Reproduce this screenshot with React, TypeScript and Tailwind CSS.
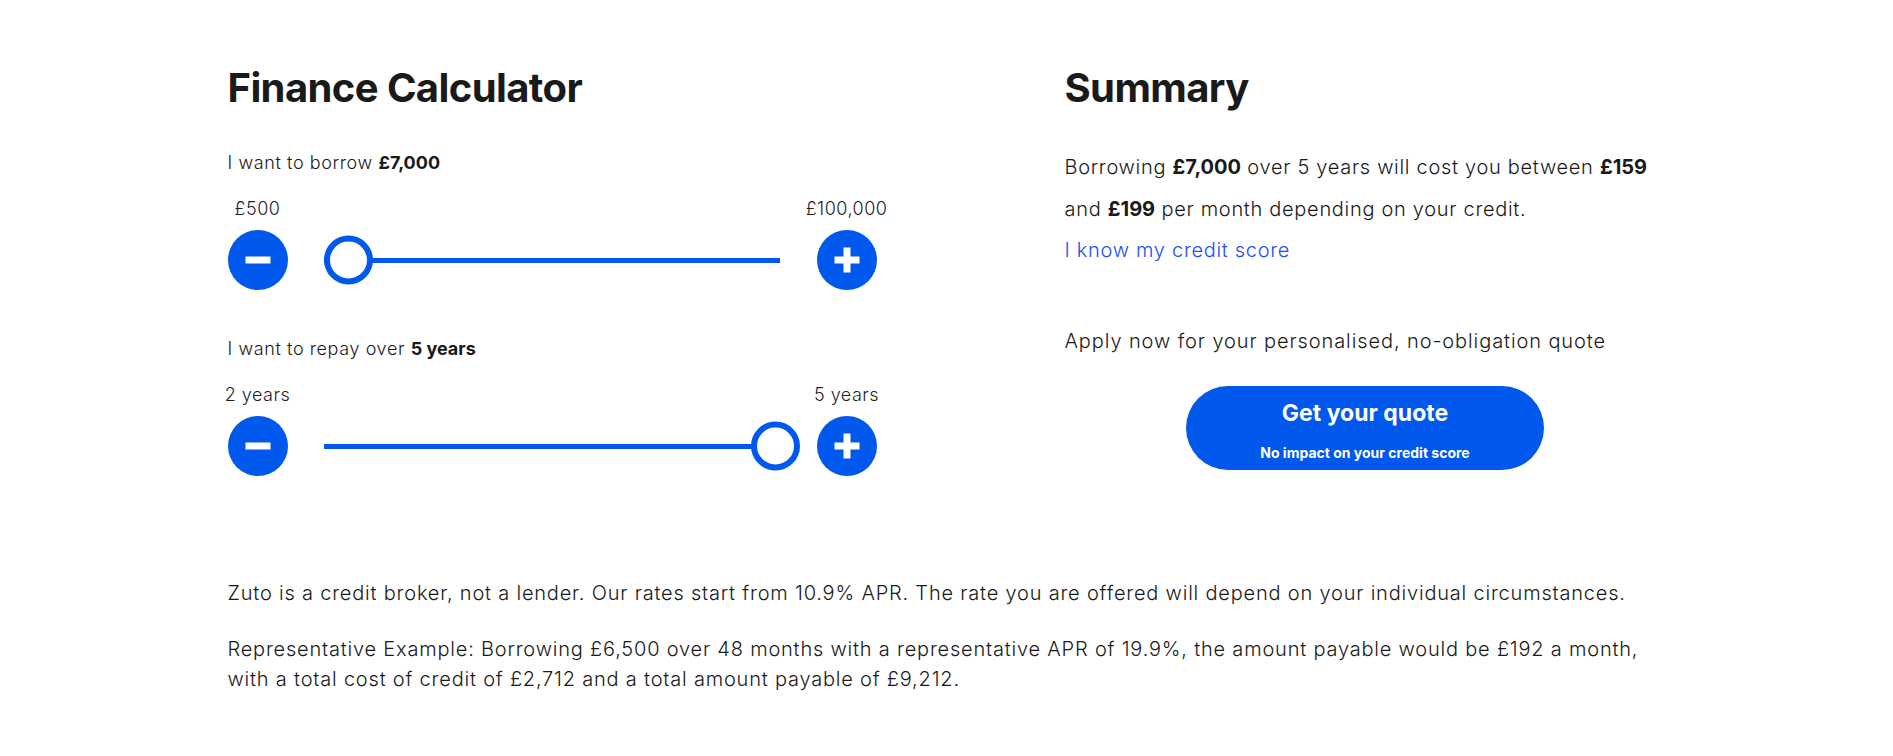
import { useState } from 'react'

const font = { fontFamily: 'Inter, "Noto Sans", sans-serif' }

function RoundButton({ kind }: { kind: 'minus' | 'plus' }) {
  return (
    <button className="flex h-[60px] w-[60px] shrink-0 items-center justify-center rounded-full bg-[#0059ec]">
      <svg width="26" height="26" viewBox="0 0 26 26">
        <rect x="0.5" y="9.5" width="25" height="7" fill="#fff" />
        {kind === 'plus' && <rect x="9.5" y="0.5" width="7" height="25" fill="#fff" />}
      </svg>
    </button>
  )
}

function Slider({ thumb }: { thumb: number }) {
  // thumb = left offset of the handle inside the track, px
  return (
    <div className="flex items-center">
      <RoundButton kind="minus" />
      <div className="relative mr-[37px] ml-[36px] h-[5px] w-[456px] bg-[#0059ec]">
        <div
          className="absolute top-1/2 h-[49px] w-[49px] -translate-y-1/2 rounded-full border-[6px] border-[#0059ec] bg-white"
          style={{ left: thumb }}
        />
      </div>
      <RoundButton kind="plus" />
    </div>
  )
}

function Range({ min, max }: { min: string; max: string }) {
  return (
    <div className="mt-[22px] flex justify-between text-[18px] leading-[24px] font-light tracking-[0.5px] text-[#1f1f1f]">
      <span className="flex w-[60px] justify-center whitespace-nowrap">{min}</span>
      <span className="flex w-[60px] justify-center whitespace-nowrap">{max}</span>
    </div>
  )
}

export default function App() {
  const [amount] = useState('£7,000')
  const [years] = useState(5)

  return (
    <div className="min-h-screen w-full bg-white text-[#1a1a1a]" style={font}>
      <div className="mx-auto w-[1438px] pt-[64px]">
        <div className="flex">
          {/* Calculator */}
          <div className="w-[649px]">
            <h2 className="text-[40px] leading-[48px] font-bold tracking-[-0.6px]">Finance Calculator</h2>

            <p className="mt-[39px] text-[18px] leading-[24px] font-light tracking-[0.6px]">
              I want to borrow <span className="font-bold tracking-normal">{amount}</span>
            </p>
            <Range min="£500" max="£100,000" />
            <div className="mt-[9px]">
              <Slider thumb={0} />
            </div>

            <p className="mt-[47px] text-[18px] leading-[24px] font-light tracking-[0.6px]">
              I want to repay over <span className="font-bold tracking-normal">{years} years</span>
            </p>
            <Range min="2 years" max="5 years" />
            <div className="mt-[9px]">
              <Slider thumb={427} />
            </div>
          </div>

          {/* Summary */}
          <div className="ml-[188px] w-[601px]">
            <h2 className="text-[40px] leading-[48px] font-bold tracking-[-0.6px]">Summary</h2>
            <p className="mt-[34px] text-[20px] leading-[42px] font-light tracking-[0.7px] whitespace-nowrap">
              Borrowing <span className="font-bold tracking-normal">£7,000</span> over 5 years will cost you between{' '}
              <span className="font-bold tracking-normal">£159</span>
              <br />
              and <span className="font-bold tracking-normal">£199</span> per month depending on your credit.
            </p>
            <a href="#" className="mt-[5px] block text-[20px] leading-[30px] font-light tracking-[0.7px] text-[#1a4ff5]">
              I know my credit score
            </a>
            <p className="mt-[61px] text-[20px] leading-[30px] font-light tracking-[0.9px] whitespace-nowrap">
              Apply now for your personalised, no-obligation quote
            </p>
            <div className="mt-[30px] flex justify-center">
              <button className="flex h-[84px] w-[358px] flex-col items-center rounded-full bg-[#0059ec] pt-[13px] text-white">
                <span className="text-[23px] leading-[28px] font-bold">Get your quote</span>
                <span className="mt-[17px] text-[14px] leading-[18px] font-bold">No impact on your credit score</span>
              </button>
            </div>
          </div>
        </div>

        {/* Disclaimer */}
        <div className="mt-[102px] text-[20px] leading-[30px] font-light tracking-[0.8px]">
          <p className="whitespace-nowrap">
            Zuto is a credit broker, not a lender. Our rates start from 10.9% APR. The rate you are offered will depend on your individual circumstances.
          </p>
          <p className="mt-[26px] whitespace-nowrap">
            Representative Example: Borrowing £6,500 over 48 months with a representative APR of 19.9%, the amount payable would be £192 a month,
            <br />
            with a total cost of credit of £2,712 and a total amount payable of £9,212.
          </p>
        </div>
      </div>
    </div>
  )
}
